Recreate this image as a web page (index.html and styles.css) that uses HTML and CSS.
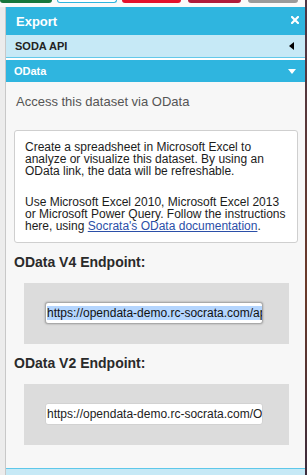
FILE: index.html
```html
<!DOCTYPE html>
<html lang="en">
<head>
    <meta charset="UTF-8">
    <meta name="viewport" content="width=device-width, initial-scale=1.0">
    <title>Export</title>
    <link rel="stylesheet" href="styles.css">
</head>
<body>
    <div class="content">
        <!-- Toolbar buttons peeking out above the pane -->
        <div class="tabs">
            <span class="tab tab-green"></span>
            <span class="tab tab-white"></span>
            <span class="tab tab-red"></span>
            <span class="tab tab-wine"></span>
            <span class="tab tab-grey"></span>
        </div>

        <div class="main">
            <div class="gutter"></div>

            <!-- Export pane -->
            <div class="panel">
                <div class="panel-head">
                    <span class="panel-title">Export</span>
                    <svg class="close" width="8" height="8" viewBox="0 0 8 8">
                        <path d="M1 1L7 7M7 1L1 7" stroke="#fff" stroke-width="2.2" stroke-linecap="square"/>
                    </svg>
                </div>

                <div class="section soda">
                    <span>SODA API</span>
                    <svg width="5" height="8" viewBox="0 0 5 8"><path d="M5 0L0 4L5 8Z" fill="#000"/></svg>
                </div>

                <div class="section odata">
                    <span>OData</span>
                    <svg width="8" height="5" viewBox="0 0 8 5"><path d="M0 0H8L4 5Z" fill="#fff"/></svg>
                </div>

                <div class="panel-body">
                    <p class="lead">Access this dataset via OData</p>

                    <div class="info-box">
                        <p>Create a spreadsheet in Microsoft Excel to analyze or visualize this dataset. By using an OData link, the data will be refreshable.</p>
                        <p>Use Microsoft Excel 2010, Microsoft Excel 2013 or Microsoft Power Query. Follow the instructions here, using <a href="#">Socrata's OData documentation</a>.</p>
                    </div>

                    <!-- V4 -->
                    <h3 class="endpoint-title">OData V4 Endpoint:</h3>
                    <div class="endpoint-box">
                        <div class="url-field focused"><span class="selected">https://opendata-demo.rc-socrata.com/api/odata/v4/6zsd-86xi</span></div>
                    </div>

                    <!-- V2 -->
                    <h3 class="endpoint-title v2">OData V2 Endpoint:</h3>
                    <div class="endpoint-box">
                        <div class="url-field">https://opendata-demo.rc-socrata.com/OData.svc/6zsd-86xi</div>
                    </div>
                </div>

                <div class="section next"></div>
            </div>
        </div>
    </div>
    <div class="edge"></div>
</body>
</html>
```

FILE: styles.css
```css
body {
    margin: 0;
    height: 475px;
    overflow: hidden;
    display: flex;
    font-family: "Liberation Sans", Arial, sans-serif;
    background: #fff;
}

.content {
    flex: 1;
    display: flex;
    flex-direction: column;
}

/* Toolbar tabs */
.tabs {
    height: 7px;
    display: flex;
    background: #fafafa;
}

.tab {
    height: 3px;
    border-radius: 0 0 4px 4px;
    box-sizing: border-box;
}

.tab-green { width: 52px; background: #17763c; }
.tab-white { width: 60px; margin-left: 5px; background: #fff; border: 1px solid #2fb5df; border-top: none; }
.tab-red { width: 59px; margin-left: 5px; background: #e6102c; }
.tab-wine { width: 53px; margin-left: 7px; background: #b01b3b; }
.tab-grey { width: 50px; margin-left: 7px; background: #9b9b9b; }

.main {
    flex: 1;
    display: flex;
}

.gutter {
    width: 5px;
    background: #ececec;
    border-right: 1px solid #c8c8c8;
}

.panel {
    flex: 1;
    display: flex;
    flex-direction: column;
    background: #f7f7f7;
}

.edge {
    width: 2px;
    background: linear-gradient(#4b3646, #6b3a2a 60%, #3c2c3c);
}

/* Pane header */
.panel-head {
    height: 28px;
    display: flex;
    align-items: center;
    justify-content: space-between;
    padding: 0 6px 0 10px;
    background: #2fb5df;
}

.panel-title {
    color: #fff;
    font-size: 13px;
    font-weight: bold;
}

.close {
    margin-top: -2px;
}

/* Accordion rows */
.section {
    display: flex;
    align-items: center;
    justify-content: space-between;
    font-size: 11px;
    font-weight: bold;
}

.soda {
    height: 22px;
    padding: 0 11px 0 9px;
    background: #c6e9f6;
    color: #222;
    border-bottom: 1px solid #62c9ea;
}

.odata {
    height: 24px;
    padding: 0 9px 0 8px;
    background: #2fb5df;
    color: #fff;
    border-top: 2px solid #fff;
    box-sizing: border-box;
}

/* Pane body */
.panel-body {
    flex: 1;
    padding-top: 12px;
}

.lead {
    margin: 0 0 0 10px;
    font-size: 13px;
    line-height: 15px;
    color: #555;
}

.info-box {
    margin: 21px 7px 0 8px;
    padding: 10px 8px 10px 10px;
    background: #fff;
    border: 1px solid #cfcfcf;
    border-radius: 3px;
    font-size: 12px;
    line-height: 12px;
    color: #1c1c1c;
}

.info-box p {
    margin: 0;
}

.info-box p + p {
    margin-top: 19px;
}

.info-box a {
    color: #2b4fa8;
}

.endpoint-title {
    margin: 11px 0 0 8px;
    font-size: 14px;
    line-height: 17px;
    color: #2a2a2a;
}

.endpoint-title.v2 {
    margin-top: 11px;
}

.endpoint-box {
    width: 265px;
    box-sizing: border-box;
    margin: 12px 0 0 18px;
    padding: 19px 21px 20px;
    background: #dcdcdc;
}

.url-field {
    width: 218px;
    height: 22px;
    box-sizing: border-box;
    padding: 0 1px;
    background: #fff;
    border: 1px solid #d2d2d2;
    border-radius: 3px;
    font-size: 12px;
    line-height: 20px;
    color: #222;
    white-space: nowrap;
    overflow: hidden;
}

.url-field.focused {
    border-color: #a9a9a9;
    box-shadow: 0 0 2px rgba(0, 0, 0, 0.35);
}

.selected {
    background: #b4d5fe;
    color: #111;
}

.next {
    height: 6px;
    background: #c6e9f6;
    border-top: 1px solid #5ec8ea;
}
```
